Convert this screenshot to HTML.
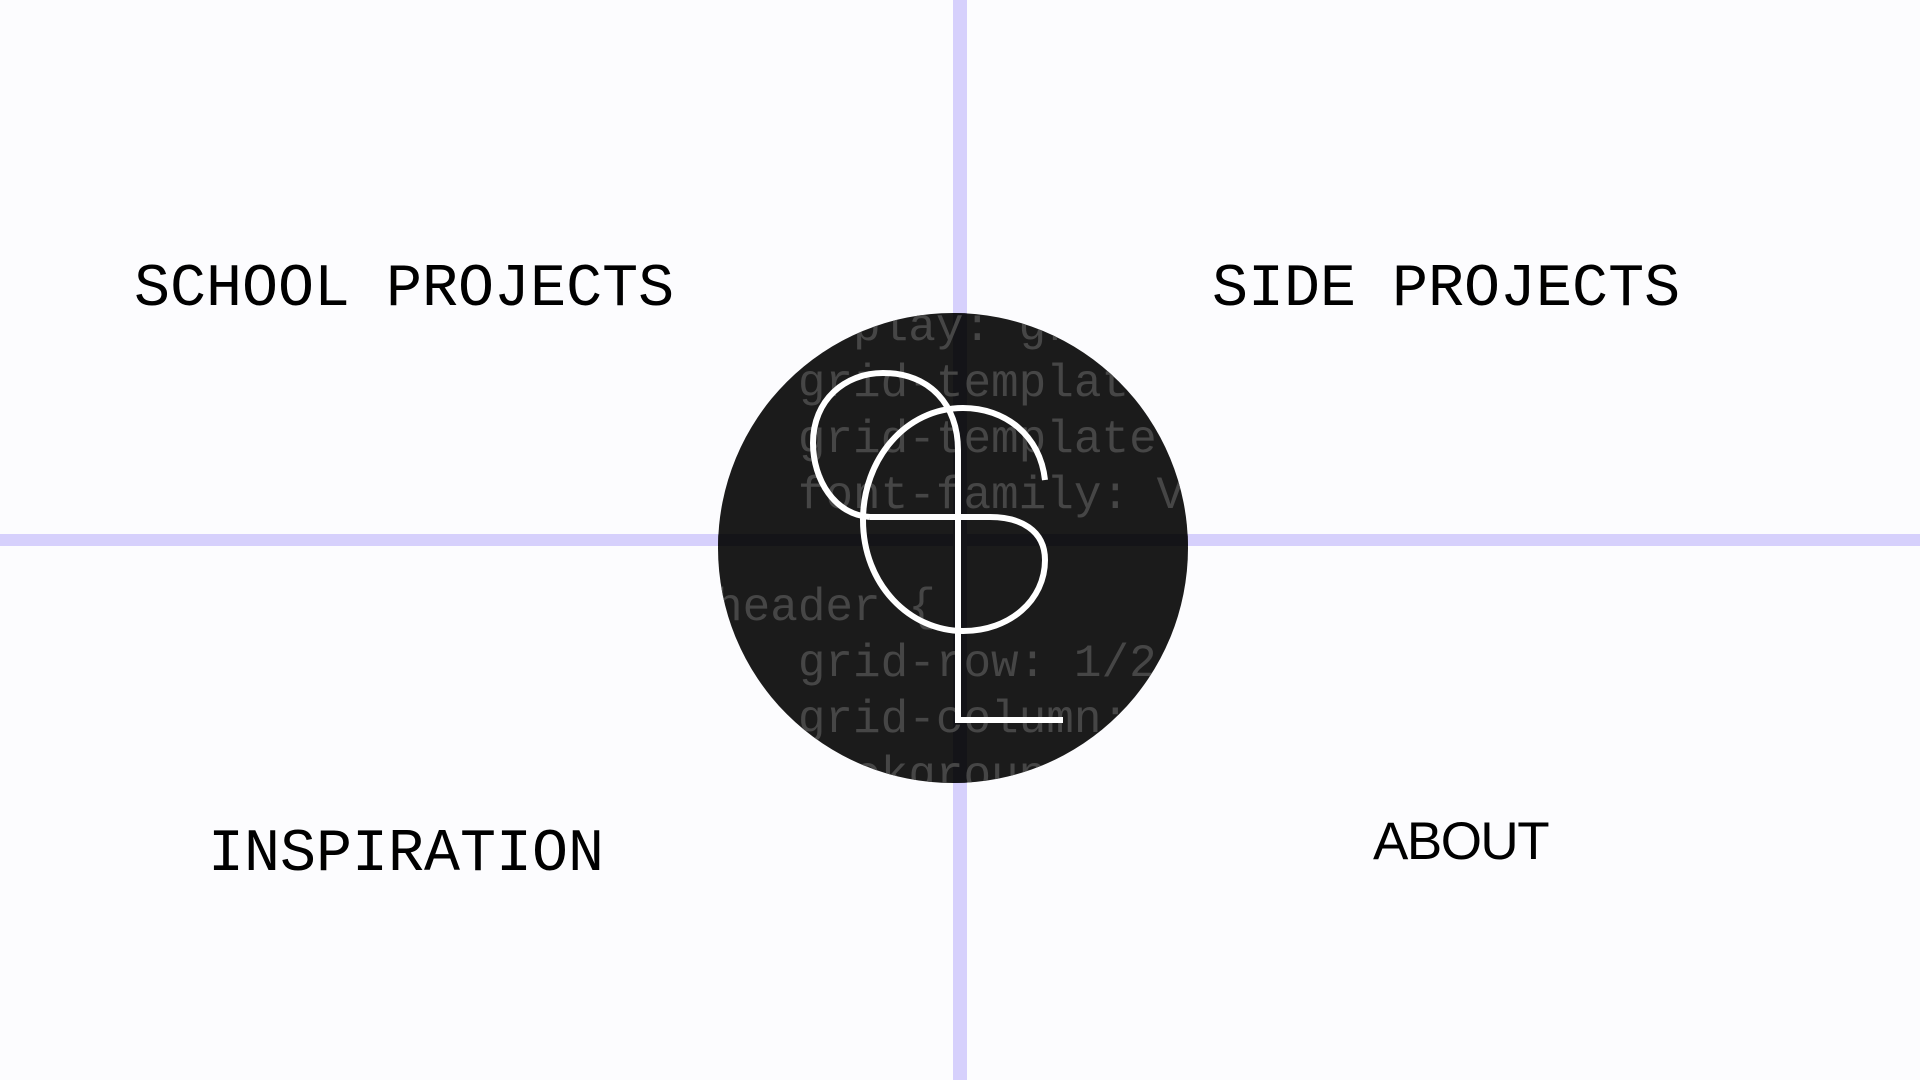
<!DOCTYPE html>
<html><head><meta charset="utf-8"><style>
html,body{margin:0;padding:0;width:1920px;height:1080px;overflow:hidden;background:#fcfcfe;position:relative}
.l{position:absolute;font-family:"Liberation Mono",monospace;font-size:60px;line-height:60px;color:#000;white-space:pre}
.vl{position:absolute;left:953px;top:0;width:14px;height:1080px;background:#d6d0fc}
.hl{position:absolute;left:0;top:534px;width:1920px;height:12px;background:#d6d0fc}
.circ{position:absolute;left:718px;top:313px;width:470px;height:470px;border-radius:50%;background:#1b1b1b;overflow:hidden}
.code{position:absolute;font-family:"Liberation Mono",monospace;font-size:46px;color:#464646;white-space:pre;line-height:56px}
</style></head><body>
<div class="vl"></div><div class="hl"></div>
<div class="circ">
 <div style="position:absolute;left:235px;top:0;width:14px;height:470px;background:#141418"></div>
 <div style="position:absolute;left:0;top:221px;width:470px;height:12px;background:#141418"></div>
 <div class="code" style="left:-3px;top:-13px">    splay: grid;
   grid-template-
   grid-template-
   font-family: V

header {
   grid-row: 1/2
   grid-column: 1
   background</div>
</div>
<svg style="position:absolute;left:0;top:0" width="1920" height="1080">
<g fill="none" stroke="#fff" stroke-width="6">
<path d="M1045,480 C1040,435 1005,408 963,408 C905,408 863,460 863,520 C863,585 910,631 963,631 C1010,631 1045,600 1045,560 C1045,530 1020,517 990,517 L870,517"/>
<path d="M870,517 C835,515 813,480 813,443 C813,400 845,373 883,373 C930,373 958,405 958,450 L958,720 L1063,720"/>
</g></svg>
<div class="l" style="left:134px;top:260px">SCHOOL PROJECTS</div>
<div class="l" style="left:1212px;top:260px">SIDE PROJECTS</div>
<div class="l" style="left:208px;top:825px">INSPIRATION</div>
<div class="l" style="left:1373px;top:812px;font-family:'Liberation Sans',sans-serif;font-size:53px;letter-spacing:-1.5px">ABOUT</div>
</body></html>
